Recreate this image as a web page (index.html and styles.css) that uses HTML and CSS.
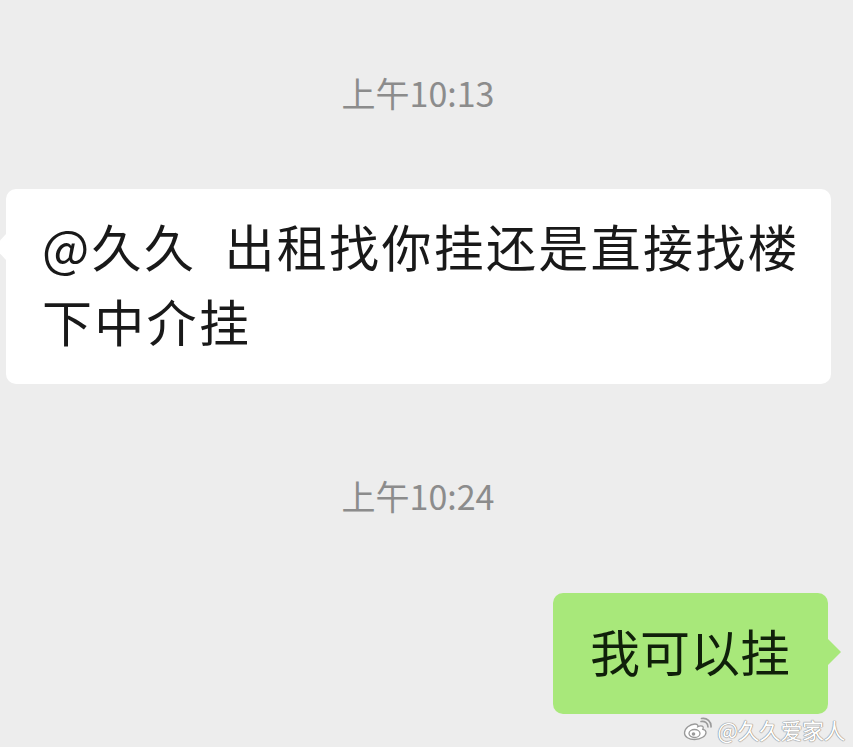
FILE: index.html
```html
<!DOCTYPE html>
<html lang="zh-CN">
<head>
<meta charset="utf-8">
<title>聊天</title>
<link rel="stylesheet" href="styles.css">
</head>
<body>
<div class="chat">
  <div class="time t1">上午10:13</div>
  <div class="row left">
    <div class="bubble white">@久久&#x2005; 出租找你挂还是直接找楼下中介挂</div>
  </div>
  <div class="time t2">上午10:24</div>
  <div class="row right">
    <div class="bubble green">我可以挂</div>
  </div>
  <div class="mark">
    <svg class="weibo" width="30" height="24" viewBox="0 0 30 24">
      <path d="M12 7c-5 0-10.5 4.5-10.5 9 0 3.8 4.5 6.5 10 6.5 6.5 0 11.5-3.5 11.5-7 0-2.2-2-3-3.2-3.2 1-2 0.3-3.5-2-3.5-1.5 0-3 .8-3 .8s.8-2.6-2.8-2.6z" fill="#fff" stroke="#9a9a9a" stroke-width="1.3"/>
      <ellipse cx="11.5" cy="16.5" rx="5.5" ry="4" fill="#fff" stroke="#9a9a9a" stroke-width="1.3"/>
      <circle cx="10.5" cy="17" r="1.8" fill="#9a9a9a"/>
      <path d="M18 4.5c3.5-.8 7 1.5 7 5.5" fill="none" stroke="#9a9a9a" stroke-width="1.6" stroke-linecap="round"/>
      <path d="M18.5 1.5c5.5-1 10 3 9.5 8.5" fill="none" stroke="#9a9a9a" stroke-width="1.6" stroke-linecap="round"/>
    </svg>
    <span class="mark-text">@久久爱家人</span>
  </div>
</div>
</body>
</html>
```

FILE: styles.css
```css
html, body {
  margin: 0;
  padding: 0;
  background: #ededed;
}
body {
  width: 853px;
  height: 747px;
  overflow: hidden;
  font-family: "Noto Sans CJK SC", "Noto Sans", sans-serif;
}
.chat {
  position: relative;
  display: flex;
  flex-direction: column;
  height: 747px;
  padding-top: 73px;
  box-sizing: border-box;
}
.time {
  text-align: center;
  font-size: 34px;
  line-height: 40px;
  color: #8c8c8c;
  padding-right: 17px;
}
.t2 {
  margin-top: 92px;
}
.row {
  display: flex;
}
.row.left {
  margin-top: 76px;
  padding-left: 6px;
}
.row.right {
  margin-top: 77px;
  justify-content: flex-end;
  padding-right: 25px;
}
.bubble {
  position: relative;
  font-size: 50px;
  line-height: 75px;
  letter-spacing: 2.3px;
  color: #191919;
  border-radius: 10px;
  padding: 19px 36px 26px 36px;
}
.bubble.white {
  background: #ffffff;
  width: 765px;
  padding-right: 24px;
}
.bubble.green {
  background: #a8e87a;
  padding: 20px 38px 26px 37px;
  letter-spacing: 0;
  color: #10200a;
}
.bubble::before {
  content: "";
  position: absolute;
  top: 45px;
  width: 0;
  height: 0;
  border-top: 13px solid transparent;
  border-bottom: 13px solid transparent;
}
.bubble.white::before {
  left: -12px;
  border-right: 12px solid #ffffff;
}
.bubble.green::before {
  right: -13px;
  top: 46px;
  border-left: 13px solid #a8e87a;
}
.mark {
  position: absolute;
  right: 8px;
  bottom: 5px;
  display: flex;
  align-items: center;
  gap: 4px;
}
.mark-text {
  font-size: 22px;
  line-height: 26px;
  color: #ffffff;
  text-shadow: 0 0 1px #8a8a8a, 0 0 1px #8a8a8a, 0 0 1px #8a8a8a;
  letter-spacing: -0.5px;
}
```
